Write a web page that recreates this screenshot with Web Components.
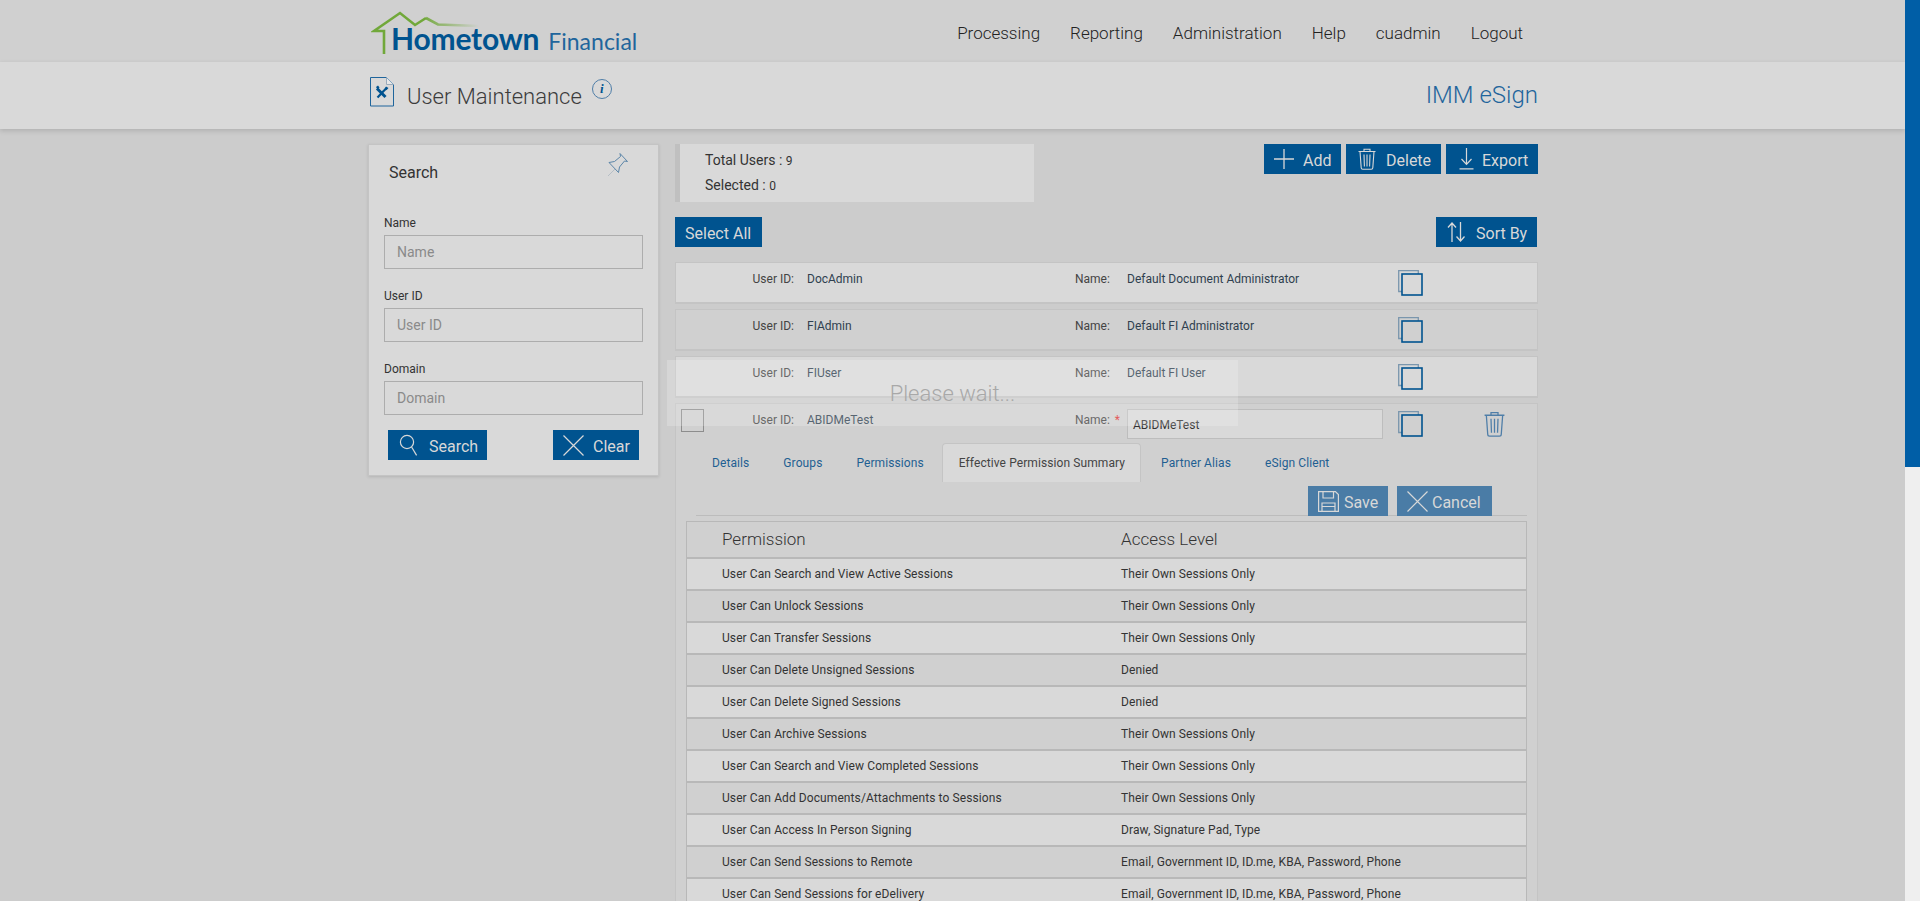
<!DOCTYPE html>
<html>
<head>
<meta charset="utf-8">
<title>User Maintenance</title>
<style>
  html, body { margin: 0; height: 100%; overflow: hidden; }
  body { font-family: Roboto, "Liberation Sans", sans-serif; color: #333; background: #ccc; }
</style>
</head>
<body>
<app-shell>
  <app-header></app-header>
  <page-title></page-title>
  <page-body>
    <search-panel slot="side"></search-panel>
    <user-summary></user-summary>
    <list-tools></list-tools>
    <user-row user-id="DocAdmin" name="Default Document Administrator"></user-row>
    <user-row user-id="FIAdmin" name="Default FI Administrator" dark></user-row>
    <user-row user-id="FIUser" name="Default FI User"></user-row>
    <user-row user-id="ABIDMeTest" name="ABIDMeTest" dark editing>
      <user-tabs></user-tabs>
      <edit-actions></edit-actions>
      <permission-table></permission-table>
    </user-row>
  </page-body>
  <wait-box>Please wait...</wait-box>
</app-shell>

<script>
const ICONS = {
  search: '<svg width="19" height="23" viewBox="0 0 19 23" fill="none" stroke="currentColor" stroke-width="1.2"><circle cx="8" cy="8" r="6.6"/><path d="M12.6 13l5 8.4"/></svg>',
  cross: '<svg width="21" height="21" viewBox="0 0 21 21" fill="none" stroke="currentColor" stroke-width="1.2"><path d="M.5.5l20 20M20.5.5l-20 20"/></svg>',
  plus: '<svg width="20" height="20" viewBox="0 0 20 20" fill="none" stroke="currentColor" stroke-width="1.3"><path d="M10 0v20M0 10h20"/></svg>',
  trash: '<svg width="18" height="22" viewBox="0 0 18 22" fill="none" stroke="currentColor" stroke-width="1.1"><path d="M.5 3.5h17M6 3.5V1.2h6v2.3M2 3.5l1.2 16.2c0 1 .6 1.6 1.6 1.6h8.4c1 0 1.6-.6 1.6-1.6L16 3.5M6 6.5l.4 12M9 6.5v12M12 6.5l-.4 12"/></svg>',
  download: '<svg width="15" height="22" viewBox="0 0 15 22" fill="none" stroke="currentColor" stroke-width="1.2"><path d="M7.5 0v16M2.5 11l5 5.4 5-5.4M.5 20.8h14"/></svg>',
  sort: '<svg width="19" height="20" viewBox="0 0 19 20" fill="none" stroke="currentColor" stroke-width="1.3"><path d="M5 20V1M1 5.500l4-4.500 4 4.500M13.500 0v19M9.500 14.500l4 4.500 4-4.500"/></svg>',
  save: '<svg width="21" height="21" viewBox="0 0 21 21" fill="none" stroke="currentColor" stroke-width="1.2"><path d="M.6.6h16.800l3 3v16.800H.6zM5 .6v6.400h10.500V.6M4 20.400v-8.400h13v8.400M4 15.500h13"/></svg>'
};

const shadow = (el, html) => {
  el.attachShadow({mode: 'open'}).innerHTML = html;
  return el.shadowRoot;
};

customElements.define('app-shell', class extends HTMLElement {
  constructor() {
    super();
    shadow(this, `
      <style>
        :host { display: flex; height: 100vh; overflow: hidden; position: relative; }
        main { flex: 1; min-width: 0; overflow: hidden; }
        .bar { width: 15px; background: #efefef; }
        .thumb { height: 467px; background: #005ea6; }
      </style>
      <main><slot></slot></main>
      <div class="bar"><div class="thumb"></div></div>`);
  }
});

customElements.define('app-header', class extends HTMLElement {
  constructor() {
    super();
    shadow(this, `
      <style>
        :host { display: flex; height: 62px; background: #d0d0d0; padding: 0 0 0 369px; justify-content: space-between; }
        .logo { position: relative; width: 280px; font-family: Lato, sans-serif; color: #00538f; }
        .logo svg { position: absolute; left: 2px; top: 10px; }
        .words { display: flex; align-items: baseline; padding: 20px 0 0 22px; white-space: nowrap; line-height: 36px; }
        .home { font-size: 30px; font-weight: 700; letter-spacing: -.2px; }
        .fin { font-size: 23px; margin-left: 9px; color: #1f659c; }
        nav { display: flex; gap: 30px; padding: 0 382px 0 0; align-items: center; height: 66px; font-size: 17px; font-weight: 300; color: #222; }
      </style>
      <div class="logo">
        <svg width="112" height="46" viewBox="0 0 112 46" fill="none">
          <defs><linearGradient id="fade" x1="50" x2="108" y1="0" y2="0" gradientUnits="userSpaceOnUse">
            <stop offset="0" stop-color="#71a83a"/><stop offset="1" stop-color="#71a83a" stop-opacity="0"/>
          </linearGradient></defs>
          <path d="M55 8l12 6.500 41 1.500" stroke="url(#fade)" stroke-width="2.600"/>
          <path d="M13 44V21H3L29 3l15 12 11-7" stroke="#71a83a" stroke-width="2.600"/>
        </svg>
        <div class="words"><span class="home">Hometown</span><span class="fin">Financial</span></div>
      </div>
      <nav><span>Processing</span><span>Reporting</span><span>Administration</span><span>Help</span><span>cuadmin</span><span>Logout</span></nav>`);
  }
});

customElements.define('page-title', class extends HTMLElement {
  constructor() {
    super();
    shadow(this, `
      <style>
        :host { display: flex; align-items: flex-start; height: 67px; background: #d9d9d9; box-shadow: 0 2px 5px rgba(0,0,0,.14); position: relative; padding: 0 367px 0 370px; }
        svg { margin-top: 15px; }
        h1 { margin: 22px 0 0 13px; font-size: 22px; line-height: 26px; font-weight: 300; color: #3c3c3c; }
        .info { width: 18px; height: 18px; margin: 17px 0 0 10px; border: 1px solid #4f7ea8; border-radius: 50%; text-align: center; font: italic 700 13px/18px "Liberation Serif", serif; color: #00538f; }
        .app { margin: 19px 0 0 auto; font-size: 24px; line-height: 28px; font-weight: 300; color: #1f659c; }
      </style>
      <svg width="24" height="30" viewBox="0 0 24 30" fill="none">
        <path d="M.5.500h16l7 7v21.500H.5z" stroke="#1f659c"/>
        <path d="M16.500.5v7h7" stroke="#9ab" fill="#e8e8e8"/>
        <path d="M7.500 20.500l9-9.500" stroke="#00538f" stroke-width="2.200"/>
        <path d="M7 11.500l8.500 8.500" stroke="#00538f" stroke-width="3"/>
        <path d="M6 10l2-1.500 1.500 2-2 2zM16 9.500l2.500 1.500-2 2.200-1.500-2z" fill="#00538f"/>
      </svg>
      <h1>User Maintenance</h1>
      <div class="info">i</div>
      <div class="app">IMM eSign</div>`);
  }
});

customElements.define('page-body', class extends HTMLElement {
  constructor() {
    super();
    shadow(this, `
      <style>
        :host { display: flex; gap: 16px; padding: 15px 0 0 368px; align-items: flex-start; }
        .col { width: 863px; display: flex; flex-direction: column; gap: 5px; }
      </style>
      <slot name="side"></slot>
      <div class="col"><slot></slot></div>`);
  }
});

customElements.define('ui-button', class extends HTMLElement {
  constructor() {
    super();
    const icon = this.getAttribute('icon');
    shadow(this, `
      <style>
        :host { display: inline-flex; box-sizing: border-box; height: 30px; align-items: center; background: var(--btn, #00538f); color: #d8d8d8; font-size: 16px; line-height: 20px; white-space: nowrap; padding-left: var(--pl, 10px); }
        svg { display: block; }
        .ic { display: block; margin-right: var(--gap, 10px); }
        .tx { padding-top: 3px; }
      </style>
      ${icon ? `<span class="ic">${ICONS[icon]}</span>` : ''}<span class="tx"><slot></slot></span>`);
  }
});

customElements.define('form-field', class extends HTMLElement {
  constructor() {
    super();
    const label = this.getAttribute('label');
    shadow(this, `
      <style>
        :host { display: block; }
        label { display: block; font-size: 12px; line-height: 14px; color: #333; margin-bottom: 5px; }
        .box { box-sizing: border-box; height: 34px; border: 1px solid #adadad; padding: 0 12px; font-size: 14px; line-height: 33px; color: #8a8a8a; }
      </style>
      <label>${label}</label>
      <div class="box">${label}</div>`);
  }
});

customElements.define('search-panel', class extends HTMLElement {
  constructor() {
    super();
    shadow(this, `
      <style>
        :host { display: block; box-sizing: border-box; width: 291px; height: 332px; background: #d9d9d9; border: 1px solid #c4c4c4; box-shadow: 0 1px 3px rgba(0,0,0,.12); position: relative; }
        h2 { margin: 0; padding: 19px 0 0 20px; font-size: 16px; line-height: 18px; font-weight: 400; color: #333; }
        .pin { position: absolute; right: 28px; top: 7px; }
        form-field { margin: 0 15px; }
        form-field:first-of-type { margin-top: 34px; }
        form-field + form-field { margin-top: 20px; }
        .acts { display: flex; justify-content: space-between; margin: 15px 19px 0 19px; }
      </style>
      <h2>Search</h2>
      <svg class="pin" width="26" height="26" viewBox="0 0 26 26" fill="none" stroke="#5b85a8">
        <path d="M4 24l7-7" stroke="#b5bec6"/>
        <path d="M5 10.500l9.500 10 1-5.500 5-6 3 .5-7.500-8 .5 3-6 5z"/>
      </svg>
      <form-field label="Name"></form-field>
      <form-field label="User ID"></form-field>
      <form-field label="Domain"></form-field>
      <div class="acts">
        <ui-button icon="search" style="width:99px;--pl:11px;--gap:11px">Search</ui-button>
        <ui-button icon="cross" style="width:86px;--pl:10px;--gap:9px">Clear</ui-button>
      </div>`);
  }
});

customElements.define('user-summary', class extends HTMLElement {
  constructor() {
    super();
    shadow(this, `
      <style>
        :host { display: flex; justify-content: space-between; align-items: flex-start; margin-bottom: 10px; }
        .box { box-sizing: border-box; width: 359px; height: 58px; background: #d9d9d9; border-left: 5px solid #c0c0c0; padding: 4px 0 0 25px; font-size: 14px; line-height: 24px; color: #333; }
        b { font-weight: 400; font-size: 12px; }
        .acts { display: flex; gap: 5px; }
      </style>
      <div class="box">Total Users : <b>9</b><br>Selected : <b>0</b></div>
      <div class="acts">
        <ui-button icon="plus" style="width:77px;--pl:10px;--gap:9px">Add</ui-button>
        <ui-button icon="trash" style="width:95px;--pl:12px;--gap:10px">Delete</ui-button>
        <ui-button icon="download" style="width:92px;--pl:13px;--gap:8px">Export</ui-button>
      </div>`);
  }
});

customElements.define('list-tools', class extends HTMLElement {
  constructor() {
    super();
    shadow(this, `
      <style>
        :host { display: flex; justify-content: space-between; padding-right: 1px; margin-bottom: 10px; }
      </style>
      <ui-button style="width:87px">Select All</ui-button>
      <ui-button icon="sort" style="width:101px;--pl:11px;--gap:10px">Sort By</ui-button>`);
  }
});

customElements.define('user-row', class extends HTMLElement {
  constructor() {
    super();
    const editing = this.hasAttribute('editing');
    const name = this.getAttribute('name');
    shadow(this, `
      <style>
        :host { display: block; box-sizing: border-box; min-height: 42px; background: #d9d9d9; border: 2px solid #c4c4c4; border-width: 1px 1px 2px 1px; font-size: 12px; color: #333; }
        :host([dark]) { background: #d0d0d0; }
        .top { display: grid; grid-template-columns: 24px 89px 13px 268px 52px 271px 86px 30px; padding-left: 5px; height: 39px; align-items: start; line-height: 16px; }
        .top > span { padding-top: 8px; }
        .lab { text-align: right; color: #444; }
        .val { color: #2f3f4f; }
        .name-lab { color: #444; }
        .req { color: #d33; margin-left: 2px; }
        .check { box-sizing: border-box; width: 23px; height: 23px; margin-top: 5px; border: 1px solid #8d8d8d; }
        .input { box-sizing: border-box; width: 256px; height: 30px; margin-top: 5px; border: 1px solid #bdbdbd; background: #d9d9d9; padding: 0 5px; line-height: 30px; color: #333; }
        .copy { margin-top: 7px; display: block; }
        .trash { margin-top: 7px; color: #4f7ea8; display: block; }
      </style>
      <div class="top">
        ${editing ? '<div class="check"></div>' : '<div></div>'}
        <span class="lab">User ID:</span><div></div>
        <span class="val">${this.getAttribute('user-id')}</span>
        <span class="name-lab">Name:${editing ? '<span class="req"> *</span>' : ''}</span>
        ${editing ? `<div class="input">${name}</div>` : `<span class="val">${name}</span>`}
        <svg class="copy" width="25" height="26" viewBox="0 0 25 26" fill="none">
          <path d="M4 21.500H.7V.7h19.600V4" stroke="#7a96ad" stroke-width="1.300"/>
          <rect x="4" y="4" width="20" height="21" stroke="#00538f" stroke-width="1.600"/>
        </svg>
        ${editing ? `<div class="trash">${ICONS.trash.replace('width="18" height="22"', 'width="21" height="26"')}</div>` : ''}
      </div>
      <slot></slot>`);
  }
});

customElements.define('user-tabs', class extends HTMLElement {
  constructor() {
    super();
    const tabs = ['Details', 'Groups', 'Permissions', 'Effective Permission Summary', 'Partner Alias', 'eSign Client'];
    shadow(this, `
      <style>
        :host { display: flex; height: 39px; margin-left: 19px; font-size: 12px; letter-spacing: .09px; color: #1f5f92; }
        span { padding: 12px 17px 0; line-height: 16px; box-sizing: border-box; white-space: nowrap; }
        .on { background: #d9d9d9; border: 1px solid #c4c4c4; border-bottom: 0; border-radius: 4px 4px 0 0; padding: 11px 15px 0 16px; color: #444; margin: 0 3px 0 1px; }
      </style>
      ${tabs.map((t, i) => `<span class="${i === 3 ? 'on' : ''}">${t}</span>`).join('')}`);
  }
});

customElements.define('edit-actions', class extends HTMLElement {
  constructor() {
    super();
    shadow(this, `
      <style>
        :host { display: flex; justify-content: flex-end; gap: 9px; box-sizing: border-box; height: 30px; margin: 4px 10px 0 20px; padding-right: 35px; border-bottom: 1px solid #bcbcbc; --btn: #4a7ca6; }
      </style>
      <ui-button icon="save" style="width:80px;--pl:10px;--gap:5px">Save</ui-button>
      <ui-button icon="cross" style="width:95px;--pl:10px;--gap:4px">Cancel</ui-button>`);
  }
});

customElements.define('permission-table', class extends HTMLElement {
  constructor() {
    super();
    const own = 'Their Own Sessions Only';
    const all = 'Email, Government ID, ID.me, KBA, Password, Phone';
    const rows = [
      ['User Can Search and View Active Sessions', own],
      ['User Can Unlock Sessions', own],
      ['User Can Transfer Sessions', own],
      ['User Can Delete Unsigned Sessions', 'Denied'],
      ['User Can Delete Signed Sessions', 'Denied'],
      ['User Can Archive Sessions', own],
      ['User Can Search and View Completed Sessions', own],
      ['User Can Add Documents/Attachments to Sessions', own],
      ['User Can Access In Person Signing', 'Draw, Signature Pad, Type'],
      ['User Can Send Sessions to Remote', all],
      ['User Can Send Sessions for eDelivery', all]
    ];
    shadow(this, `
      <style>
        :host { display: block; margin: 5px 10px 0 10px; border: 1px solid #b8b8b8; border-bottom: 0; color: #333; font-size: 12px; letter-spacing: .09px; }
        .r { display: grid; grid-template-columns: 399px 1fr; padding-left: 35px; height: 30px; line-height: 30px; border-bottom: 2px solid #b8b8b8; background: #d9d9d9; }
        .r:nth-child(even) { background: #d0d0d0; }
        .head { height: 35px; line-height: 35px; font-size: 17px; font-weight: 300; letter-spacing: 0; background: #d0d0d0; }
      </style>
      <div class="r head"><span>Permission</span><span>Access Level</span></div>
      ${rows.map(r => `<div class="r"><span>${r[0]}</span><span>${r[1]}</span></div>`).join('')}`);
  }
});

customElements.define('wait-box', class extends HTMLElement {
  constructor() {
    super();
    shadow(this, `
      <style>
        :host { position: absolute; left: 667px; top: 360px; width: 571px; height: 66px; display: flex; align-items: center; justify-content: center; background: rgba(255,255,255,.2); font-size: 22px; font-weight: 300; color: #a8a8a8; }
      </style>
      <slot></slot>`);
  }
});
</script>
</body>
</html>
